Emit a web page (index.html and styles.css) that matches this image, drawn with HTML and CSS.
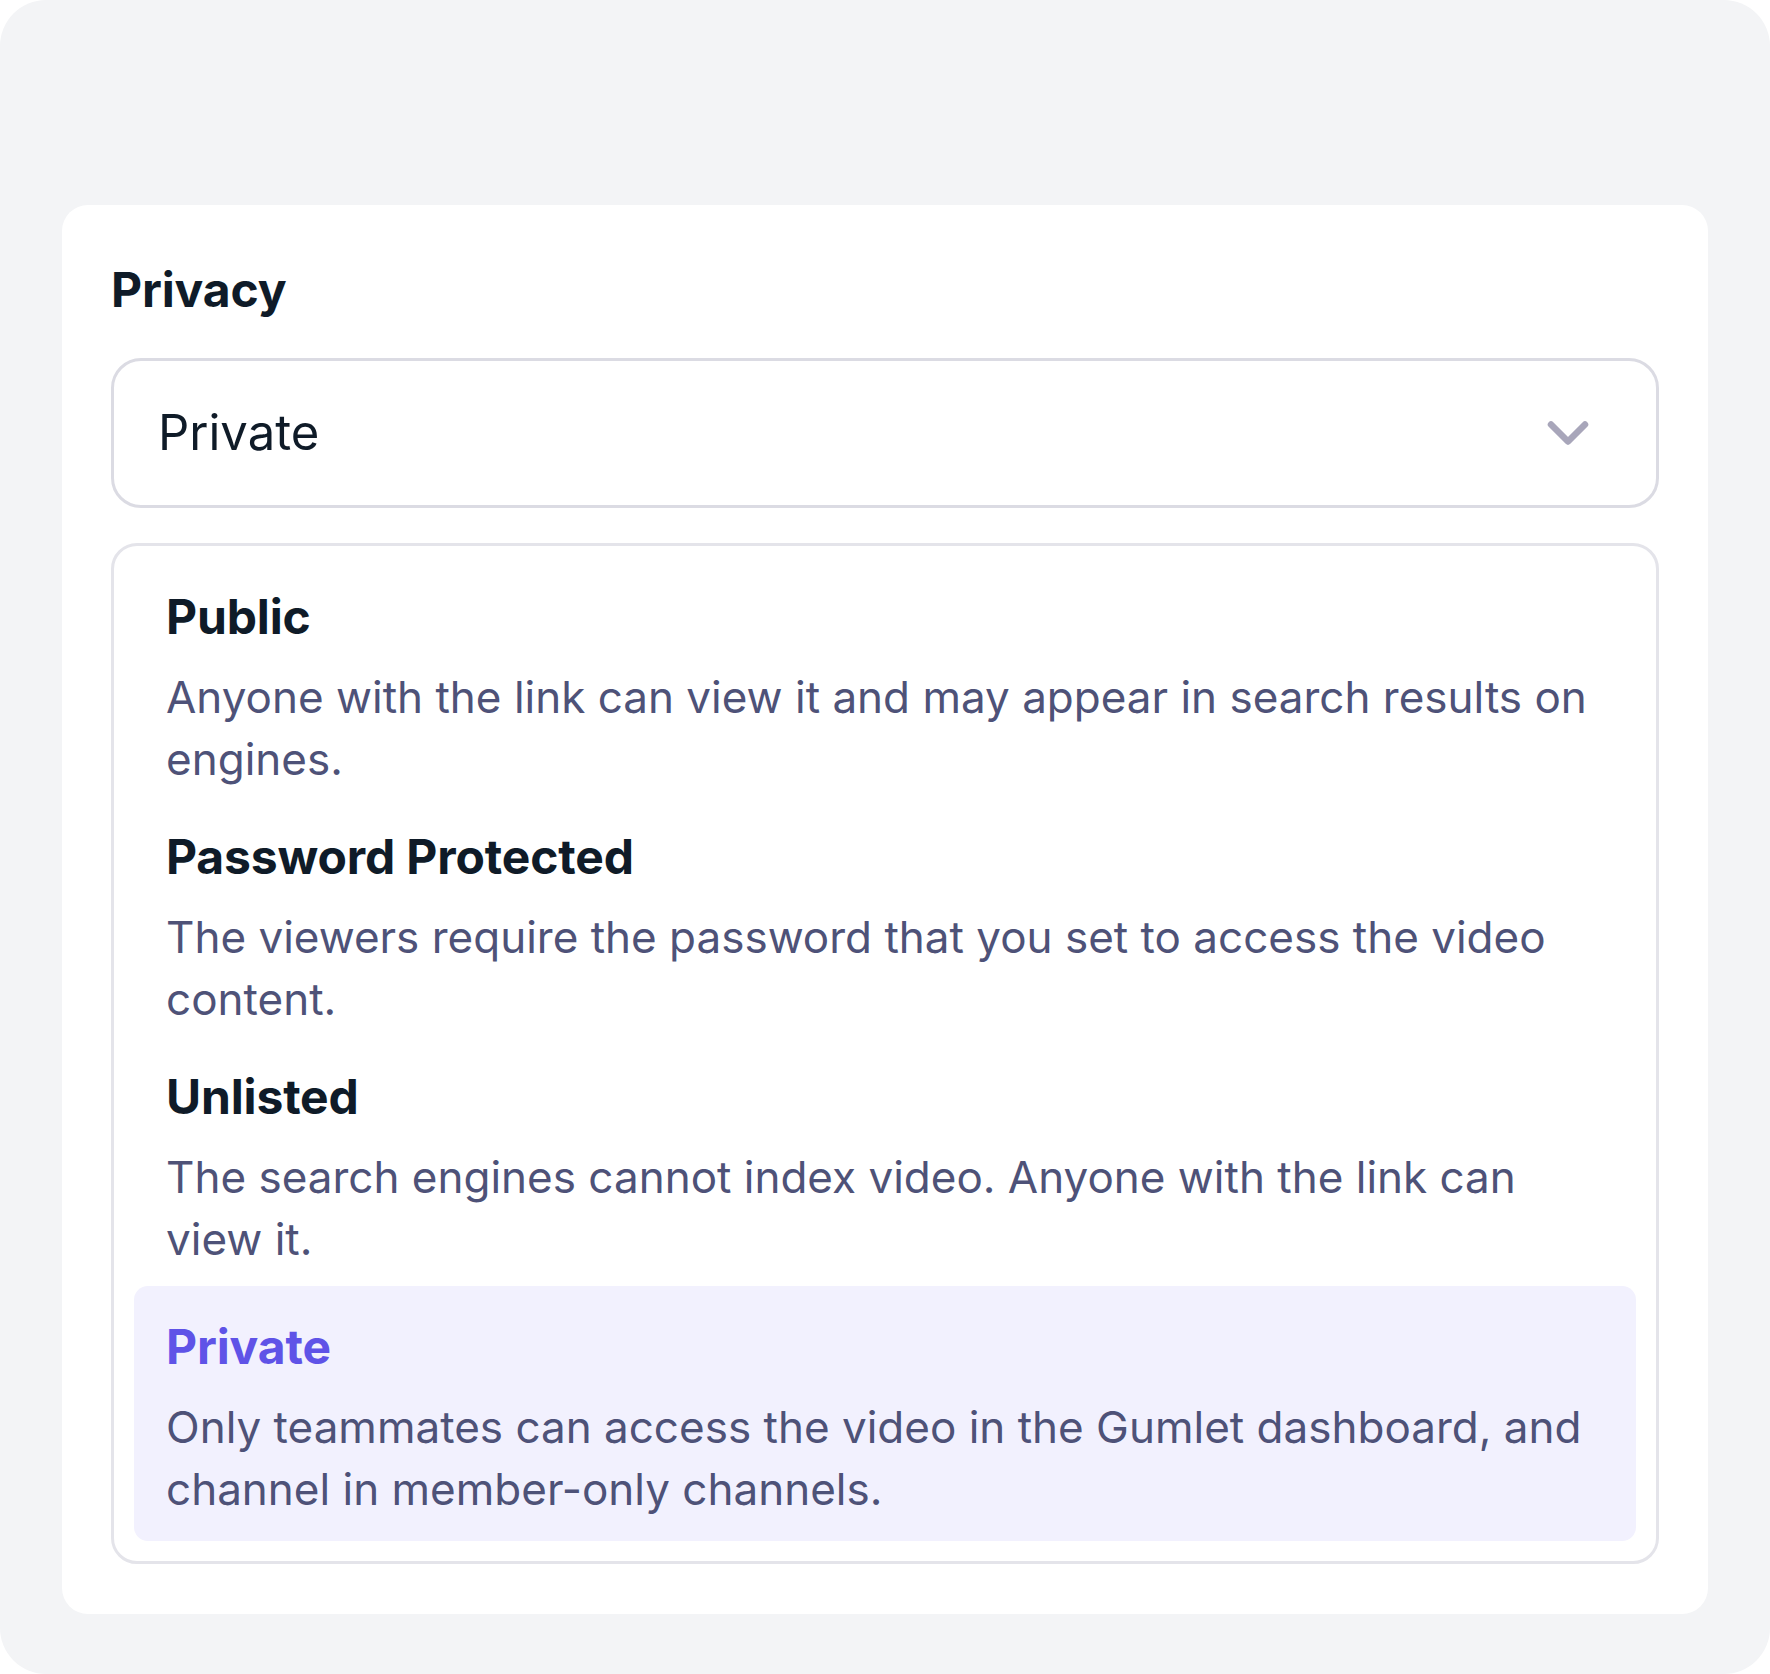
FILE: index.html
```html
<!DOCTYPE html>
<html lang="en">
<head>
    <meta charset="UTF-8" />
    <meta name="viewport" content="width=device-width, initial-scale=1" />
    <title>Privacy</title>
    <link rel="stylesheet" href="styles.css">
</head>
<body>
<div class="page">
    <div class="card">
        <h2 class="field-label">Privacy</h2>

        <div class="select">
            <span class="select-value">Private</span>
            <svg class="chevron" width="48" height="48" viewBox="0 0 48 48" aria-hidden="true">
                <path d="M7 15.5 L24 32.5 L41 15.5" fill="none" stroke="#a8a6ba" stroke-width="6.5" stroke-linecap="round" stroke-linejoin="round" />
            </svg>
        </div>

        <ul class="options">
            <li class="option">
                <div class="option-title">Public</div>
                <div class="option-desc">Anyone with the link can view it and may appear in search results on engines.</div>
            </li>
            <li class="option">
                <div class="option-title">Password Protected</div>
                <div class="option-desc">The viewers require the password that you set to access the video content.</div>
            </li>
            <li class="option">
                <div class="option-title">Unlisted</div>
                <div class="option-desc">The search engines cannot index video. Anyone with the link can view it.</div>
            </li>
            <li class="option selected">
                <div class="option-title">Private</div>
                <div class="option-desc">Only teammates can access the video in the Gumlet dashboard, and channel in member-only channels.</div>
            </li>
        </ul>
    </div>
</div>
</body>
</html>
```

FILE: styles.css
```css
:root {
    --page-bg: #f3f4f6;
    --card-bg: #fff;
    --heading: #0f1b28;
    --text: #4e5278;
    --accent: #5f53e7;
    --accent-bg: #f2f1fe;
    --select-border: #dbdbe3;
    --list-border: #e4e4ea;
}
html, body {
    margin: 0;
    background: #fff;
}
body {
    font-family: Inter, "Noto Sans", "Liberation Sans", sans-serif;
    color: var(--heading);
}
.page {
    box-sizing: border-box;
    width: 1770px;
    height: 1674px;
    background: var(--page-bg);
    border-radius: 46px;
    padding: 205px 62px 61px;
}
.card {
    background: var(--card-bg);
    border-radius: 26px;
    padding: 56px 49px 50px;
}
.field-label {
    margin: 0 0 39px;
    font-size: 48px;
    line-height: 58px;
    font-weight: 700;
    letter-spacing: -0.15px;
    color: var(--heading);
}
.select {
    box-sizing: border-box;
    height: 150px;
    display: flex;
    align-items: center;
    justify-content: space-between;
    border: 3px solid var(--select-border);
    border-radius: 30px;
    padding: 0 64px 0 44px;
}
.select-value {
    font-size: 49px;
    line-height: 60px;
    color: var(--heading);
}
.chevron {
    display: block;
}
.options {
    list-style: none;
    margin: 35px 0 0;
    padding: 20px;
    border: 3px solid var(--list-border);
    border-radius: 26px;
}
.option {
    padding: 22px 32px 16px;
}
.option-title {
    font-size: 48px;
    line-height: 58px;
    font-weight: 700;
    letter-spacing: -0.15px;
    color: var(--heading);
    margin-bottom: 20px;
}
.option-desc {
    font-size: 44px;
    line-height: 62px;
    color: var(--text);
}
.option.selected {
    background: var(--accent-bg);
    border-radius: 14px;
    padding: 32px 32px 21px;
}
.option.selected .option-title {
    color: var(--accent);
}
```
